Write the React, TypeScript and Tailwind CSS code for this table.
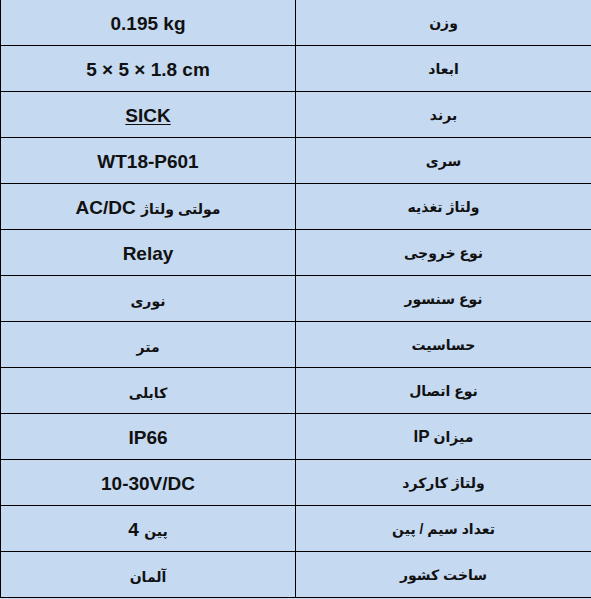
import type { ReactNode } from 'react';

const fa = (t: string) => <span className="text-[14px]">{t}</span>;

const rows: { value: ReactNode; label: ReactNode; rtl?: boolean }[] = [
  { value: '0.195 kg', label: 'وزن' },
  { value: '5 × 5 × 1.8 cm', label: 'ابعاد' },
  { value: <span className="underline underline-offset-2">SICK</span>, label: 'برند' },
  { value: 'WT18-P601', label: 'سری' },
  { value: <>{fa('مولتی ولتاژ')} AC/DC</>, label: 'ولتاژ تغذیه', rtl: true },
  { value: 'Relay', label: 'نوع خروجی' },
  { value: fa('نوری'), label: 'نوع سنسور', rtl: true },
  { value: fa('متر'), label: 'حساسیت', rtl: true },
  { value: fa('کابلی'), label: 'نوع اتصال', rtl: true },
  { value: 'IP66', label: <>میزان <span className="text-[17px]">IP</span></> },
  { value: '10-30V/DC', label: 'ولتاژ کارکرد' },
  { value: <>{fa('پین')} 4</>, label: 'تعداد سیم / پین', rtl: true },
  { value: fa('آلمان'), label: 'ساخت کشور', rtl: true },
];

export default function App() {
  return (
    <div className="w-[591px] h-[599px] overflow-hidden bg-[#c5d9f1] font-['Liberation_Sans','DejaVu_Sans',sans-serif] font-bold text-[#111]">
      {rows.map((row, i) => (
        <div key={i} className="flex h-[46px] border-b border-black">
          <div
            dir={row.rtl ? 'rtl' : 'ltr'}
            className="w-[296px] shrink-0 border-l border-r border-black flex items-center justify-center text-[19px] pt-[4px]"
          >
            <span>{row.value}</span>
          </div>
          <div dir="rtl" className="flex-1 flex items-center justify-center text-[14px] pt-[1px]">
            <span>{row.label}</span>
          </div>
        </div>
      ))}
    </div>
  );
}
